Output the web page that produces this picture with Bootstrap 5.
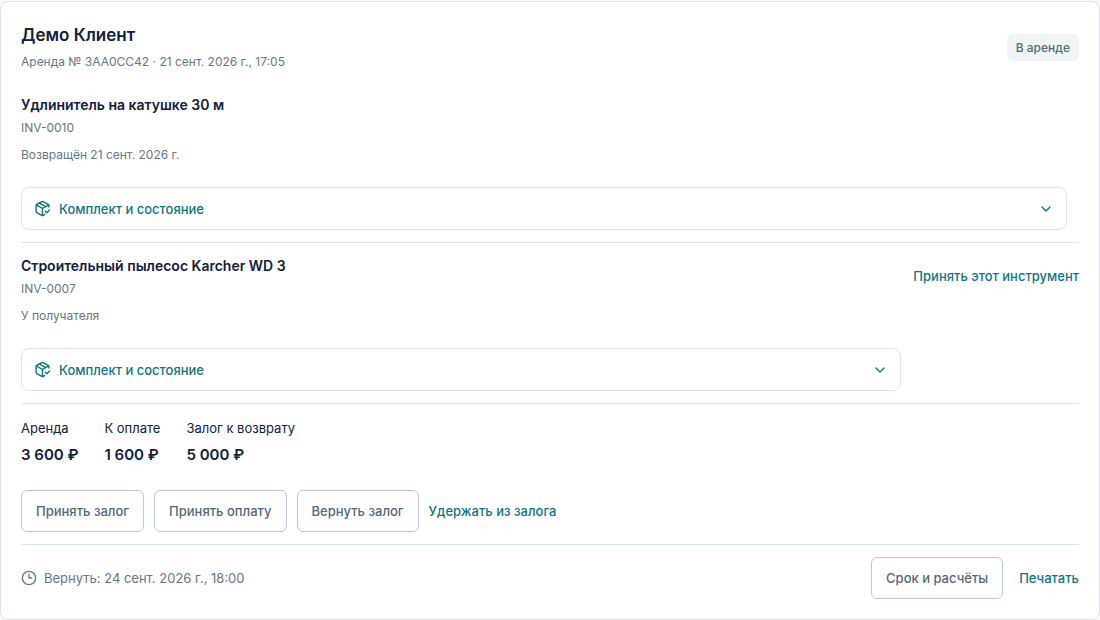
<!DOCTYPE html>
<html lang="ru">
<head>
<meta charset="utf-8">
<meta name="viewport" content="width=device-width, initial-scale=1">
<title>Аренда № 3AA0CC42</title>
<link href="https://cdn.jsdelivr.net/npm/bootstrap@5.3.0/dist/css/bootstrap.min.css" rel="stylesheet">
<style>
  :root { --ink: #10213a; --muted: #657786; --slate: #55677a; --teal: #0f7580; --rule: #dbe3ea; --outline: #b8c8d4; }
  body { font-family: Inter, "Noto Sans", sans-serif; font-size: 13px; line-height: 20px; color: var(--ink); background: #f8fafb; }
  .rental { border: 1px solid var(--rule); border-radius: 8px; padding: 20px; margin-top: 1px; }
  .client { font-size: 17px; line-height: 27px; font-weight: 600; margin-bottom: 3px; }
  .rental-head { padding-bottom: 10px; }
  .meta { font-size: 12px; line-height: 20px; color: var(--muted); }
  .status { font-size: 12px; line-height: 19px; font-weight: 500; color: var(--slate); background: #eff4f7; padding: 4px 9px; border-radius: 6px; }
  .tool { padding: 12px 0; border-bottom: 1px solid var(--rule); }
  .tool-name { font-size: 14px; line-height: 22px; font-weight: 600; margin-bottom: 2px; }
  .tool-state { margin-top: 7px; }
  .tool-columns { gap: 12px; }
  .kit { border: 1px solid var(--rule); border-radius: 8px; margin-top: 22px; }
  .kit summary { display: flex; align-items: center; gap: 8px; height: 41px; padding: 0 12px; font-weight: 500; color: var(--teal); list-style: none; }
  .kit summary::-webkit-details-marker { display: none; }
  .btn { --bs-btn-font-size: 13px; --bs-btn-line-height: 20px; --bs-btn-font-weight: 500; --bs-btn-border-radius: 6px; --bs-btn-padding-y: 10px; --bs-btn-padding-x: 14px; }
  .btn-quiet { --bs-btn-color: var(--slate); --bs-btn-bg: #fff; --bs-btn-border-color: var(--outline); --bs-btn-hover-border-color: var(--teal); }
  .btn-text { --bs-btn-color: var(--teal); --bs-btn-hover-color: #0b5a63; --bs-btn-padding-x: 0; --bs-btn-padding-y: 11px; --bs-btn-border-width: 0; }
  .sums { gap: 26px; padding-top: 13px; }
  .sums dt { font-weight: 400; line-height: 22px; }
  .sums dd { font-size: 15px; line-height: 24px; font-weight: 600; margin: 4px 0 0; }
  .actions { gap: 10px; margin-top: 23px; padding-bottom: 12px; border-bottom: 1px solid var(--rule); }
  .due { gap: 7px; color: var(--muted); }
  svg { flex: none; fill: none; stroke: currentColor; stroke-width: 2; stroke-linecap: round; stroke-linejoin: round; }
</style>
</head>
<body>
<svg class="d-none" aria-hidden="true">
  <symbol id="package-check" viewBox="0 0 24 24">
    <path d="m16 16 2 2 4-4"/>
    <path d="M21 10V8a2 2 0 0 0-1-1.73l-7-4a2 2 0 0 0-2 0l-7 4A2 2 0 0 0 3 8v8a2 2 0 0 0 1 1.73l7 4a2 2 0 0 0 2 0l2-1.14"/>
    <path d="m7.5 4.27 9 5.15M3.29 7 12 12l8.71-5M12 22V12"/>
  </symbol>
  <symbol id="chevron-down" viewBox="0 0 24 24"><path d="m6 9 6 6 6-6"/></symbol>
  <symbol id="clock" viewBox="0 0 24 24"><circle cx="12" cy="12" r="10"/><path d="M12 6v6h4"/></symbol>
</svg>
<main>
  <article class="rental bg-white">
    <header class="rental-head d-flex justify-content-between align-items-center">
      <div>
        <h1 class="client">Демо Клиент</h1>
        <div class="meta">Аренда № 3AA0CC42 · 21 сент. 2026 г., 17:05</div>
      </div>
      <span class="status">В аренде</span>
    </header>

    <section class="tool">
      <div class="tool-columns d-flex align-items-start">
        <div class="flex-grow-1">
          <h2 class="tool-name">Удлинитель на катушке 30 м</h2>
          <div class="meta">INV-0010</div>
          <div class="meta tool-state">Возвращён 21 сент. 2026 г.</div>
          <details class="kit">
            <summary><svg width="17" height="17"><use href="#package-check"/></svg>Комплект и состояние<svg class="ms-auto" width="16" height="16"><use href="#chevron-down"/></svg></summary>
          </details>
        </div>
        <div></div>
      </div>
    </section>

    <section class="tool">
      <div class="tool-columns d-flex align-items-start">
        <div class="flex-grow-1">
          <h2 class="tool-name">Строительный пылесос Karcher WD 3</h2>
          <div class="meta">INV-0007</div>
          <div class="meta tool-state">У получателя</div>
          <details class="kit">
            <summary><svg width="17" height="17"><use href="#package-check"/></svg>Комплект и состояние<svg class="ms-auto" width="16" height="16"><use href="#chevron-down"/></svg></summary>
          </details>
        </div>
        <button type="button" class="btn btn-text">Принять этот инструмент</button>
      </div>
    </section>

    <dl class="sums d-flex flex-wrap mb-0">
      <div><dt>Аренда</dt><dd>3 600 ₽</dd></div>
      <div><dt>К оплате</dt><dd>1 600 ₽</dd></div>
      <div><dt>Залог к возврату</dt><dd>5 000 ₽</dd></div>
    </dl>

    <div class="actions d-flex flex-wrap">
      <button type="button" class="btn btn-quiet">Принять залог</button>
      <button type="button" class="btn btn-quiet">Принять оплату</button>
      <button type="button" class="btn btn-quiet">Вернуть залог</button>
      <button type="button" class="btn btn-text">Удержать из залога</button>
    </div>

    <footer class="d-flex flex-wrap justify-content-between align-items-center pt-2 mt-1">
      <div class="due d-flex align-items-center"><svg width="16" height="16"><use href="#clock"/></svg>Вернуть: 24 сент. 2026 г., 18:00</div>
      <div class="d-flex gap-3">
        <button type="button" class="btn btn-quiet">Срок и расчёты</button>
        <button type="button" class="btn btn-text">Печатать</button>
      </div>
    </footer>
  </article>
</main>
<script src="https://cdn.jsdelivr.net/npm/bootstrap@5.3.0/dist/js/bootstrap.bundle.min.js"></script>
</body>
</html>
